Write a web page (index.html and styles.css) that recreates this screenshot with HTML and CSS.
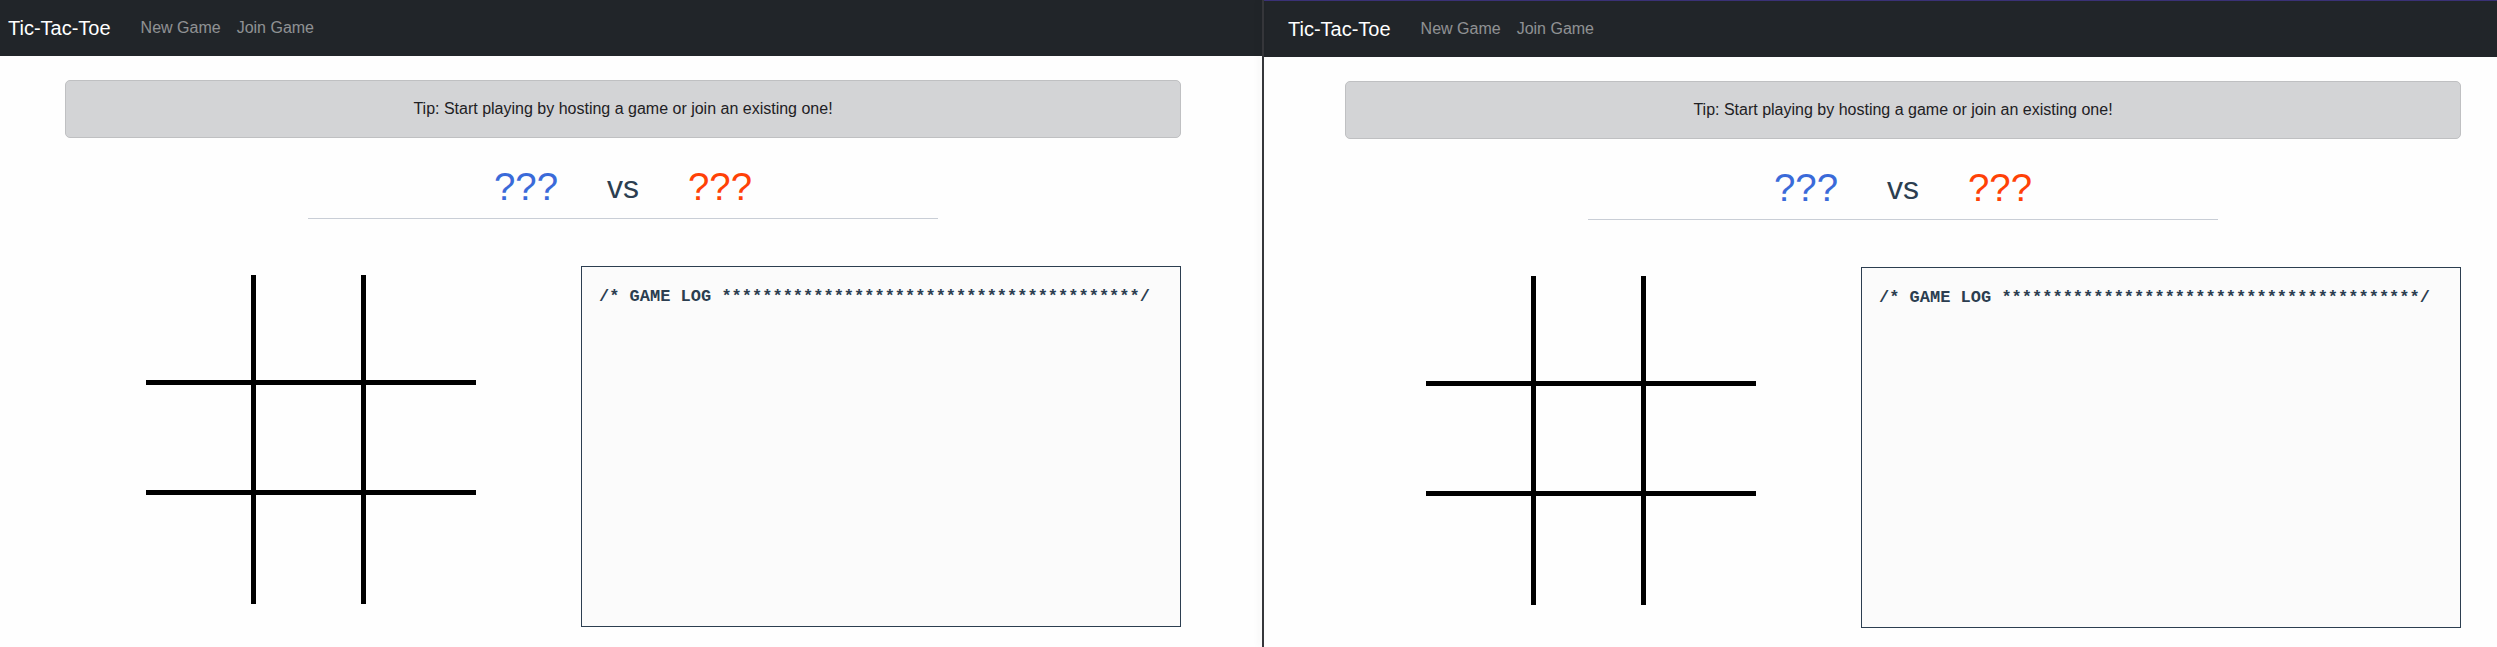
FILE: index.html
```html
<!DOCTYPE html>
<html lang="en">
<head>
<meta charset="utf-8">
<title>Tic-Tac-Toe</title>
<link rel="stylesheet" href="styles.css">
</head>
<body>
<div class="screen">
  <section class="window window--left">
    <nav class="navbar">
      <span class="brand">Tic-Tac-Toe</span>
      <a class="nav-link">New Game</a>
      <a class="nav-link">Join Game</a>
    </nav>
    <main class="content">
      <div class="tip">Tip: Start playing by hosting a game or join an existing one!</div>
      <div class="versus">
        <span class="player player--x">???</span>
        <span class="vs">vs</span>
        <span class="player player--o">???</span>
      </div>
      <hr class="rule">
      <div class="game">
        <div class="board">
          <div class="cell"></div><div class="cell"></div><div class="cell"></div>
          <div class="cell"></div><div class="cell"></div><div class="cell"></div>
          <div class="cell"></div><div class="cell"></div><div class="cell"></div>
        </div>
        <div class="log">/* GAME LOG *****************************************/</div>
      </div>
    </main>
  </section>
  <div class="divider"></div>
  <section class="window window--right">
    <nav class="navbar">
      <span class="brand">Tic-Tac-Toe</span>
      <a class="nav-link">New Game</a>
      <a class="nav-link">Join Game</a>
    </nav>
    <main class="content">
      <div class="tip">Tip: Start playing by hosting a game or join an existing one!</div>
      <div class="versus">
        <span class="player player--x">???</span>
        <span class="vs">vs</span>
        <span class="player player--o">???</span>
      </div>
      <hr class="rule">
      <div class="game">
        <div class="board">
          <div class="cell"></div><div class="cell"></div><div class="cell"></div>
          <div class="cell"></div><div class="cell"></div><div class="cell"></div>
          <div class="cell"></div><div class="cell"></div><div class="cell"></div>
        </div>
        <div class="log">/* GAME LOG *****************************************/</div>
      </div>
    </main>
  </section>
</div>
</body>
</html>
```
FILE: styles.css
```css
* { box-sizing: border-box; }

html, body {
  margin: 0;
  padding: 0;
  background: #fefefe;
}

body {
  font-family: "Liberation Sans", Arial, sans-serif;
  color: #212529;
}

.screen {
  display: flex;
  width: 2497px;
  height: 647px;
  overflow: hidden;
}

.window {
  height: 100%;
  overflow: hidden;
  background: #fefefe;
}

.window--left {
  flex: 0 0 1262px;
}

.window--right {
  flex: 1 1 auto;
  border-top: 1px solid #3a3176;
}

.divider {
  flex: 0 0 2px;
  background: #35363a;
  box-shadow: -3px 0 6px rgba(0, 0, 0, 0.07);
  position: relative;
  z-index: 1;
}

.navbar {
  display: flex;
  align-items: center;
  height: 56px;
  padding: 0 8px;
  background: #212529;
  white-space: nowrap;
}

.window--right .navbar {
  padding-left: 24px;
}

.brand {
  font-size: 20px;
  color: #ffffff;
  margin-right: 22px;
}

.nav-link {
  font-size: 16px;
  color: rgba(255, 255, 255, 0.5);
  padding: 0 8px;
  cursor: pointer;
}

.content {
  width: 1116px;
  margin-left: 65px;
  padding-top: 24px;
}

.window--right .content {
  margin-left: 81px;
}

.tip {
  height: 58px;
  display: flex;
  align-items: center;
  justify-content: center;
  background: #d3d4d6;
  border: 1px solid #bfc0c2;
  border-radius: 5px;
  font-size: 16px;
  color: #1e2124;
}

.versus {
  display: flex;
  justify-content: center;
  align-items: center;
  gap: 49px;
  margin-top: 26px;
  height: 46px;
  line-height: 46px;
}

.player {
  font-size: 38.4px;
}

.player--x { color: #3a6ad9; }
.player--o { color: #ff4106; }

.vs {
  font-size: 32px;
  color: #2c3e50;
}

.rule {
  width: 630px;
  margin: 8px auto 0;
  border: 0;
  border-top: 1px solid #c9ced6;
  height: 0;
}

.game {
  display: flex;
  align-items: flex-start;
  margin-top: 47px;
}

.board {
  display: grid;
  grid-template-columns: 105px 105px 110px;
  grid-template-rows: 105px 105px 109px;
  gap: 5px;
  background: #000;
  margin: 9px 0 0 81px;
}

.cell {
  background: #fefefe;
}

.log {
  margin-left: auto;
  width: 600px;
  height: 361px;
  border: 1px solid #2c3e50;
  background: #fbfbfb;
  padding: 20px 17px;
  font-family: "Liberation Mono", "Courier New", monospace;
  font-weight: bold;
  font-size: 17px;
  line-height: 20px;
  color: #2c3e50;
  white-space: pre;
}
```
